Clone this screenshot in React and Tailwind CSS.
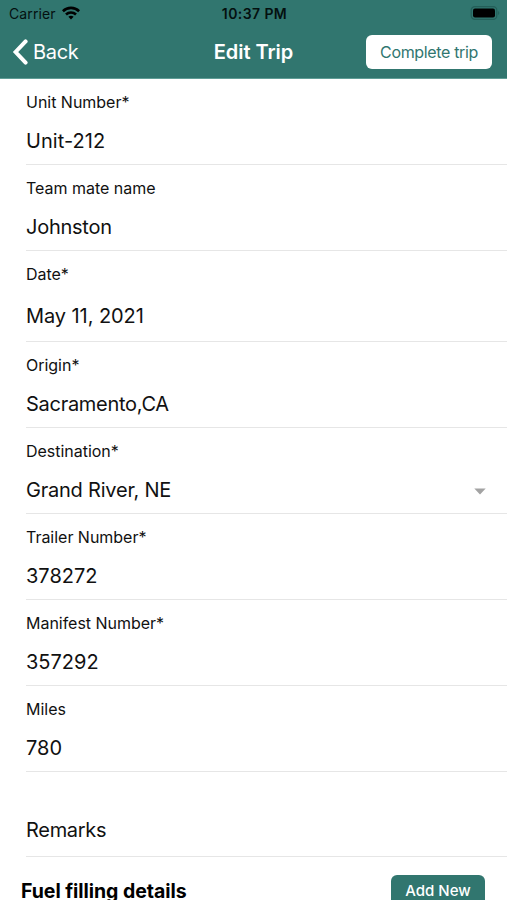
import React, { useState } from "react";

const initialFields = [
  { name: "unit", label: "Unit Number*", value: "Unit-212", spacing: "tracking-[0.05px]" },
  { name: "teammate", label: "Team mate name", value: "Johnston", spacing: "tracking-[-0.25px]" },
  { name: "date", label: "Date*", value: "May 11, 2021", spacing: "tracking-[-0.08px]", tall: true },
  { name: "origin", label: "Origin*", value: "Sacramento,CA", spacing: "tracking-[-0.28px]" },
  { name: "destination", label: "Destination*", value: "Grand River, NE", spacing: "tracking-[-0.22px]", dropdown: true },
  { name: "trailer", label: "Trailer Number*", value: "378272", spacing: "tracking-[0px]" },
  { name: "manifest", label: "Manifest Number*", value: "357292", spacing: "tracking-[0px]" },
  { name: "miles", label: "Miles", value: "780", spacing: "tracking-[0px]" },
];

function StatusBar() {
  return (
    <div className="grid h-[27px] grid-cols-3 items-center pl-[9px] pr-[7px] text-[14px] text-[#04100f]">
      <div className="flex items-center gap-[6px]">
        <span className="tracking-[0.1px]">Carrier</span>
        <svg className="-mt-[2px]" width="18" height="14" viewBox="0 0 18 14" fill="none" stroke="#000" strokeWidth="2.6">
          <path d="M0.9 5.2C5.4 0.8 12.6 0.8 17.1 5.2" />
          <path d="M4 8.5C6.8 5.8 11.2 5.8 14 8.5" />
          <path d="M9 13.4L6.4 10.7C7.9 9.4 10.1 9.4 11.6 10.7Z" fill="#000" stroke="none" />
        </svg>
      </div>
      <span className="text-center font-semibold tracking-[0.4px]">10:37 PM</span>
      <svg className="-mt-[1px] justify-self-end" width="30" height="14" viewBox="0 0 30 14">
        <rect x="1.2" y="0.7" width="25.6" height="12.6" rx="3.6" fill="none" stroke="#245f59" strokeWidth="1.2" />
        <rect x="3" y="2.5" width="22" height="9" rx="2" fill="#000" />
        <path d="M28.2 5v4c1.4-.6 1.4-3.4 0-4Z" fill="#245f59" />
      </svg>
    </div>
  );
}

function Header() {
  return (
    <header className="h-[79px] border-b border-[#5f9d96] bg-[#31766f]">
      <StatusBar />
      <div className="grid h-[50px] grid-cols-[1fr_auto_1fr] items-center pl-[12px] pr-[15px] text-white">
        <button type="button" className="flex items-center gap-[5px] text-[20px]">
          <svg width="16" height="26" viewBox="0 0 16 26" fill="none" stroke="currentColor" strokeWidth="4" strokeLinecap="round">
            <path d="M13.6 2.4L3.6 13L13.6 23.6" />
          </svg>
          <span className="tracking-[-0.3px]">Back</span>
        </button>
        <h1 className="pl-[3px] text-center text-[20px] font-semibold tracking-[-0.03px]">Edit Trip</h1>
        <button
          type="button"
          className="h-[34px] w-[126px] justify-self-end whitespace-nowrap rounded-[6px] bg-white text-[16px] tracking-[-0.35px] text-[#31766f]"
        >
          Complete trip
        </button>
      </div>
    </header>
  );
}

function Field({ field, onChange }) {
  return (
    <label className={`ml-[26px] flex flex-col border-b border-[#e6e6e6] pt-[13px] ${field.tall ? "h-[91px]" : "h-[86px]"}`}>
      <span className="text-[16px] leading-[20px] tracking-[-0.02px]">{field.label}</span>
      <span className={`flex items-center ${field.tall ? "mt-[19px]" : "mt-[16px]"}`}>
        <input
          name={field.name}
          value={field.value}
          onChange={onChange}
          className={`h-[26px] min-w-0 flex-1 bg-transparent text-[20px] outline-none ${field.spacing}`}
        />
        {field.dropdown && (
          <svg className="mr-[21px] mt-[2px]" width="12" height="7" viewBox="0 0 12 7">
            <path d="M0.3 0.5H11.7L6 6.5Z" fill="#a3a3a3" />
          </svg>
        )}
      </span>
    </label>
  );
}

export default function App() {
  const [fields, setFields] = useState(initialFields);

  const handleChange = (e) => {
    const { name, value } = e.target;
    setFields(fields.map((f) => (f.name === name ? { ...f, value } : f)));
  };

  return (
    <div className="h-[900px] w-[507px] overflow-hidden bg-white font-['Inter',sans-serif] text-[#111]">
      <Header />
      <main>
        {fields.map((f) => (
          <Field key={f.name} field={f} onChange={handleChange} />
        ))}
        <div className="ml-[26px] flex h-[85px] items-end border-b border-[#e6e6e6] pb-[13px]">
          <span className="text-[20px] leading-[26px] tracking-[-0.3px]">Remarks</span>
        </div>
        <div className="flex items-start justify-between pl-[21px] pr-[22px] pt-[18px]">
          <h2 className="mt-[3px] text-[19.5px] font-bold leading-[26px] tracking-[-0.05px] text-black">Fuel filling details</h2>
          <button type="button" className="h-[33px] w-[94px] whitespace-nowrap rounded-[6px] bg-[#31766f] text-[15px] font-medium text-white">
            Add New
          </button>
        </div>
      </main>
    </div>
  );
}
